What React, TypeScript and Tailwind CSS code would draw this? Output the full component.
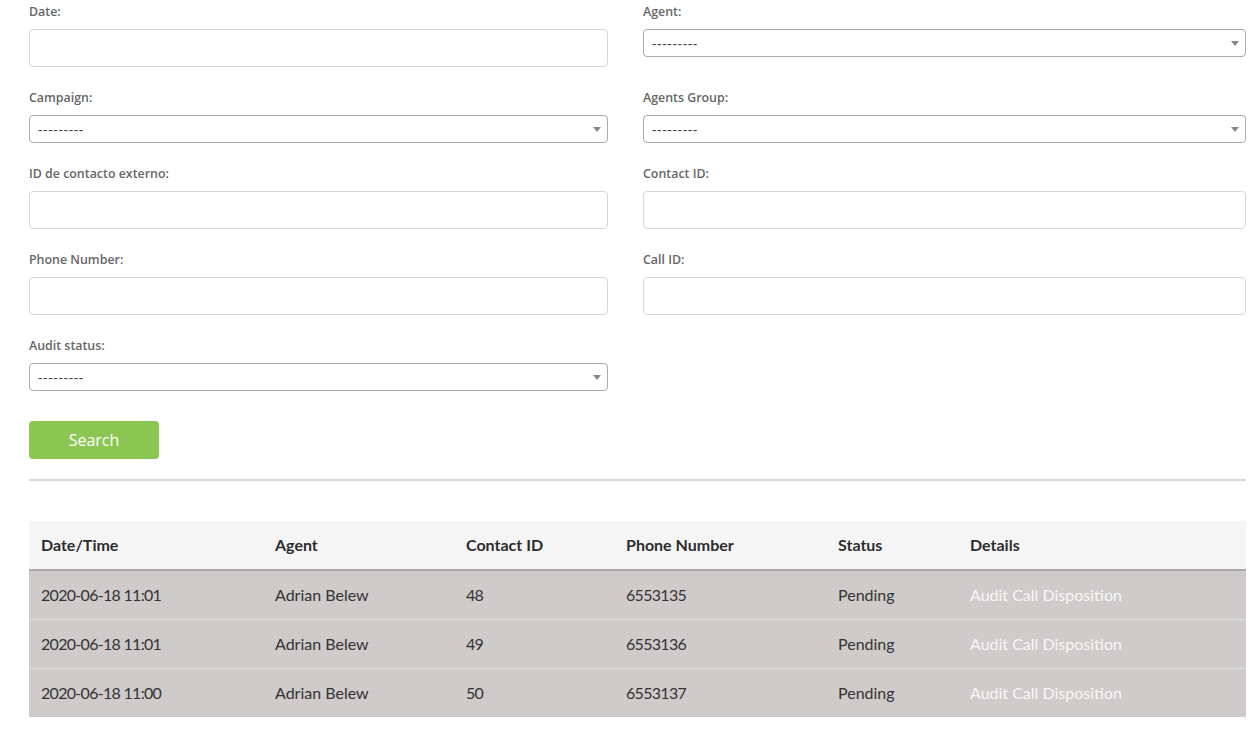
import React from "react";

const labelCls =
    "block text-[12.4px] leading-[23px] mb-[6px] font-semibold text-[#666]";

const TextField: React.FC<{ label: string }> = ({ label }) => (
    <div className="mb-[19px]">
        <label className={labelCls}>{label}</label>
        <input
            type="text"
            className="block w-full h-[38px] rounded-[4px] border border-[#d3d6d8] bg-white px-3 outline-none"
        />
    </div>
);

const SelectField: React.FC<{ label: string }> = ({ label }) => (
    <div className="mb-[19px]">
        <label className={labelCls}>{label}</label>
        <div className="relative flex h-[28px] items-center rounded-[4px] border border-[#aaa] bg-white pl-[8px]">
            <span className="text-[14px] tracking-[0.6px] text-[#444]">---------</span>
            <span className="absolute right-[6px] top-[11px] h-0 w-0 border-x-[4px] border-t-[5px] border-x-transparent border-t-[#888]" />
        </div>
    </div>
);

const rows = [
    { date: "2020-06-18 11:01", agent: "Adrian Belew", contact: "48", phone: "6553135" },
    { date: "2020-06-18 11:01", agent: "Adrian Belew", contact: "49", phone: "6553136" },
    { date: "2020-06-18 11:00", agent: "Adrian Belew", contact: "50", phone: "6553137" },
];

const headers = ["Date/Time", "Agent", "Contact ID", "Phone Number", "Status", "Details"];
const colWidths = ["w-[234px]", "w-[191px]", "w-[160px]", "w-[212px]", "w-[132px]", ""];

export default function App() {
    return (
        <div className="min-h-[753px] bg-white pl-[29px] pr-[10px] font-['Open_Sans',sans-serif]">
            <div className="grid grid-cols-[579px_603px] gap-x-[35px]">
                <TextField label="Date:" />
                <SelectField label="Agent:" />
                <SelectField label="Campaign:" />
                <SelectField label="Agents Group:" />
                <TextField label="ID de contacto externo:" />
                <TextField label="Contact ID:" />
                <TextField label="Phone Number:" />
                <TextField label="Call ID:" />
                <SelectField label="Audit status:" />
            </div>
            <button className="mt-[11px] h-[38px] w-[130px] rounded-[4px] bg-[#8bc652] text-[16px] text-white">
                Search
            </button>
            <div className="mt-[20px] h-[2px] w-[1217px] bg-[#d9d9d9]" />
            <table className="mt-[40px] w-[1217px] table-fixed border-collapse font-['Lato',sans-serif] text-[16px]">
                <thead>
                    <tr className="h-[49px] border-b-2 border-[#a9a9a9] bg-[#f5f5f5]">
                        {headers.map((h, i) => (
                            <th
                                key={h}
                                className={`${colWidths[i]} px-3 text-left font-bold text-[#2d2d2d]`}
                            >
                                {h}
                            </th>
                        ))}
                    </tr>
                </thead>
                <tbody>
                    {rows.map((r, i) => (
                        <tr
                            key={i}
                            className="h-[49px] border-b border-[#e2dfdf] bg-[#cfcbca] text-[#333] last:border-b-0"
                        >
                            <td className="px-3 tracking-[-0.7px]">{r.date}</td>
                            <td className="px-3">{r.agent}</td>
                            <td className="px-3 tracking-[-0.7px]">{r.contact}</td>
                            <td className="px-3 tracking-[-0.7px]">{r.phone}</td>
                            <td className="px-3">Pending</td>
                            <td className="px-3 text-[#f7f7f7]">Audit Call Disposition</td>
                        </tr>
                    ))}
                </tbody>
            </table>
        </div>
    );
}
